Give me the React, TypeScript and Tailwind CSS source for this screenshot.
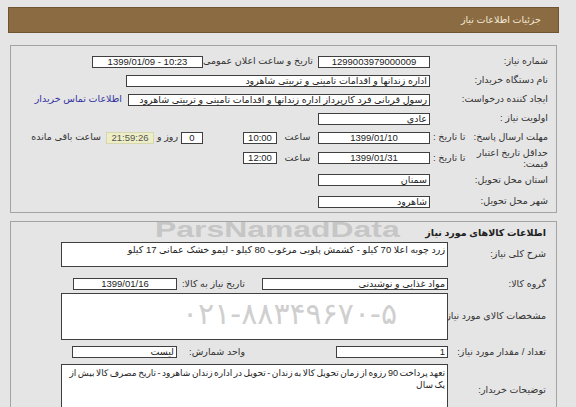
import React from "react"

const Box = ({ children, className = "", ltr }: { children?: React.ReactNode; className?: string; ltr?: boolean }) => (
  <div
    dir={ltr ? "ltr" : undefined}
    className={
      "h-[12px] border border-[#3f3f3f] bg-white px-[2px] leading-[10px] text-[#222] whitespace-nowrap overflow-hidden " +
      className
    }
  >
    {children}
  </div>
)

const Label = ({ children, className = "" }: { children: React.ReactNode; className?: string }) => (
  <div className={"text-[#333] whitespace-nowrap " + className}>{children}</div>
)

export default function App() {
  return (
    <div
      dir="rtl"
      className="relative w-[576px] h-[407px] overflow-hidden bg-[#e5e5e5] pt-[7px] font-['Liberation_Sans','DejaVu_Sans',sans-serif] text-[9.5px]"
    >
      {/* header bar */}
      <div className="mr-[17px] w-[551px] h-[26px] bg-[#8b6b42] border border-[#6e5432] flex items-center pr-[17px]">
        <span className="text-[#f3ead7]">جزئیات اطلاعات نیاز</span>
      </div>

      {/* panel 1 */}
      <div className="mr-[19px] mt-[12px] w-[547px] h-[168px] border border-[#a3a3a3] pt-[6px]">
        <div className="flex items-center h-[19px]">
          <Label className="w-[126px] pr-[8px]">شماره نیاز:</Label>
          <Box ltr className="w-[112px] text-center">1299003979000009</Box>
          <Label className="w-[110px] mr-[5px]">تاریخ و ساعت اعلان عمومی:</Label>
          <Box ltr className="w-[111px] text-center">1399/01/09 - 10:23</Box>
        </div>
        <div className="flex items-center h-[19px]">
          <Label className="w-[126px] pr-[8px]">نام دستگاه خریدار:</Label>
          <Box className="w-[304px]">اداره زندانها و اقدامات تامینی و تربیتی شاهرود</Box>
        </div>
        <div className="flex items-center h-[19px]">
          <Label className="w-[126px] pr-[8px]">ایجاد کننده درخواست:</Label>
          <Box className="w-[302px]">رسول قربانی فرد کارپرداز اداره زندانها و اقدامات تامینی و تربیتی شاهرود</Box>
          <a className="mr-[6px] text-[#3232a0] whitespace-nowrap">اطلاعات تماس خریدار</a>
        </div>
        <div className="flex items-center h-[19px]">
          <Label className="w-[126px] pr-[8px]">اولویت نیاز :</Label>
          <Box className="w-[112px]">عادی</Box>
        </div>
        <div className="flex items-center h-[19px]">
          <div className="w-[126px] pr-[8px] pl-[3px] flex justify-between items-center">
            <Label>مهلت ارسال پاسخ:</Label>
            <Label>تا تاریخ :</Label>
          </div>
          <Box ltr className="w-[112px] text-center">1399/01/10</Box>
          <Label className="w-[41px] text-center">ساعت</Label>
          <Box ltr className="w-[34px] text-center">10:00</Box>
          <Box ltr className="w-[22px] mr-[40px] text-center">0</Box>
          <Label className="mx-[3px]">روز و</Label>
          <div
            dir="ltr"
            className="h-[12px] w-[48px] bg-[#eeeec6] border border-[#d6d6b0] text-center leading-[10px] text-[#555]"
          >
            21:59:26
          </div>
          <Label className="mr-[5px]">ساعت باقی مانده</Label>
        </div>
        <div className="flex items-center h-[22px]">
          <div className="w-[126px] pr-[8px] pl-[3px] flex justify-between items-center">
            <div className="text-[#333] leading-[11px]">
              <div className="whitespace-nowrap">حداقل تاریخ اعتبار</div>
              <div className="whitespace-nowrap">قیمت:</div>
            </div>
            <Label>تا تاریخ :</Label>
          </div>
          <Box ltr className="w-[112px] text-center">1399/01/31</Box>
          <Label className="w-[41px] text-center">ساعت</Label>
          <Box ltr className="w-[34px] text-center">12:00</Box>
        </div>
        <div className="flex items-center h-[22px]">
          <Label className="w-[126px] pr-[8px]">استان محل تحویل:</Label>
          <Box className="w-[112px]">سمنان</Box>
        </div>
        <div className="flex items-center h-[21px]">
          <Label className="w-[126px] pr-[8px]">شهر محل تحویل:</Label>
          <Box className="w-[112px]">شاهرود</Box>
        </div>
      </div>

      {/* watermark, behind panel 2 content */}
      <div
        dir="ltr"
        className="pointer-events-none absolute left-[155px] top-[213px] origin-left scale-x-[1.45] text-[22px] font-bold text-[#c6c6c6] font-['Liberation_Sans',sans-serif]"
      >
        ParsNamadData
      </div>

      {/* panel 2 */}
      <div className="relative mr-[19px] mt-[8px] w-[547px] h-[200px] border border-[#a3a3a3] pt-[3px]">
        <div className="h-[16px] flex items-center pr-[10px]">
          <span className="font-bold text-[#222]">اطلاعات کالاهای مورد نیاز</span>
        </div>
        <div className="flex items-center h-[27px]">
          <Label className="w-[108px] pr-[10px]">شرح کلی نیاز:</Label>
          <div className="w-[387px] h-[25px] border border-[#3f3f3f] bg-white px-[2px] pt-[1px] leading-[11px] text-[#222]">
            زرد چوبه اعلا 70 کیلو - کشمش پلویی مرغوب 80 کیلو - لیمو خشک عمانی 17 کیلو
          </div>
        </div>
        <div className="flex items-center h-[16px] mt-[8px]">
          <Label className="w-[108px] pr-[10px]">گروه کالا:</Label>
          <Box className="w-[186px]">مواد غذایی و نوشیدنی</Box>
          <Label className="w-[85px] pr-[17px]">تاریخ نیاز به کالا:</Label>
          <Box ltr className="w-[104px] text-center">1399/01/16</Box>
        </div>
        <div className="flex items-center h-[47px] mt-[1px]">
          <Label className="w-[108px] pr-[10px]">مشخصات کالای مورد نیاز:</Label>
          <div className="w-[387px] h-[47px] border border-[#3f3f3f] bg-white overflow-hidden">
            <div
              dir="ltr"
              className="pointer-events-none mt-[2px] ml-[120px] text-[30px] leading-[36px] text-[#cfcfcf] font-['DejaVu_Sans',sans-serif] whitespace-nowrap"
            >
              ۰۲۱-۸۸۳۴۹۶۷۰-۵
            </div>
          </div>
        </div>
        <div className="flex items-center h-[24px]">
          <Label className="w-[108px] pr-[10px]">تعداد / مقدار مورد نیاز:</Label>
          <Box className="w-[112px] ml-[3px]">1</Box>
          <div className="w-[71px]" />
          <Label className="w-[85px] pr-[17px]">واحد شمارش:</Label>
          <Box className="w-[105px]">لیست</Box>
        </div>
        <div className="flex items-center h-[52px]">
          <Label className="w-[108px] pr-[10px]">توضیحات خریدار:</Label>
          <div className="w-[387px] h-[52px] border border-[#3f3f3f] bg-white px-[2px] pt-[2px] leading-[12px] text-[9px] [word-spacing:-1px] text-[#222]">
            تعهد پرداخت 90 رزوه از زمان تحویل کالا به زندان - تحویل در اداره زندان شاهرود - تاریخ مصرف کالا بیش از یک سال
          </div>
        </div>
      </div>
    </div>
  )
}
